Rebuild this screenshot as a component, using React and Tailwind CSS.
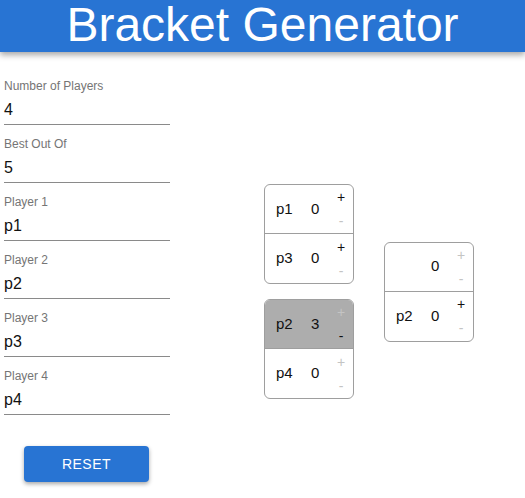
import React from "react";

function Field({ label, value }) {
  return (
    <div className="pt-[11px]">
      <div className="h-[14px] pt-[1px] text-[12px] leading-[14px] text-[#757575]">{label}</div>
      <div className="mt-[4px] h-[24px] pt-[2px] text-[16px] leading-[24px] text-[#111]">{value}</div>
      <div className="mt-[4px] h-px bg-[#8a8a8a]" />
    </div>
  );
}

function Row({ name, score, plus, minus, bg, border }) {
  return (
    <div className={`flex h-[49px] items-center pl-[11px] ${bg || ""} ${border ? "border-b border-[#9e9e9e]" : ""}`}>
      <div className="w-[35px] text-[15px] text-[#111]">{name}</div>
      <div className="text-[15px] text-[#111]">{score}</div>
      <div className="ml-auto mr-[4px] flex w-[16px] flex-col text-center text-[14px]">
        <span className={`leading-[24px] ${plus ? "text-[#111]" : "text-[#c4c4c4]"}`}>+</span>
        <span className={`leading-[24px] ${minus ? "text-[#111]" : "text-[#c4c4c4]"}`}>-</span>
      </div>
    </div>
  );
}

function Match({ top, bottom }) {
  return (
    <div className="w-[90px] overflow-hidden rounded-[6px] border border-[#9e9e9e] bg-white">
      <Row {...top} border />
      <Row {...bottom} />
    </div>
  );
}

export default function App() {
  return (
    <div className="min-h-[498px] bg-white font-['Liberation_Sans',Arial,sans-serif]">
      <div className="relative z-10 h-[52px] bg-[#2874d3] pt-[1px] text-center shadow-[0_3px_6px_rgba(0,0,0,0.35)]">
        <h1 className="text-[48px] leading-[48px] text-white">Bracket Generator</h1>
      </div>
      <div className="flex">
        <div className="w-[170px] pl-[4px] pt-[15px]">
          <Field label="Number of Players" value="4" />
          <Field label="Best Out Of" value="5" />
          <Field label="Player 1" value="p1" />
          <Field label="Player 2" value="p2" />
          <Field label="Player 3" value="p3" />
          <Field label="Player 4" value="p4" />
          <button className="ml-[20px] mt-[31px] h-[36px] w-[125px] rounded-[4px] bg-[#2874d3] text-[14px] tracking-[0.5px] text-white shadow-[0_2px_4px_rgba(0,0,0,0.35)]">
            RESET
          </button>
        </div>
        <div className="ml-[94px] mt-[132px] flex items-center gap-[30px] self-start">
          <div className="flex flex-col gap-[15px]">
            <Match
              top={{ name: "p1", score: "0", plus: true, minus: false }}
              bottom={{ name: "p3", score: "0", plus: true, minus: false }}
            />
            <Match
              top={{ name: "p2", score: "3", plus: false, minus: true, bg: "bg-[#adadad]" }}
              bottom={{ name: "p4", score: "0", plus: false, minus: false }}
            />
          </div>
          <Match
            top={{ name: "", score: "0", plus: false, minus: false }}
            bottom={{ name: "p2", score: "0", plus: true, minus: false }}
          />
        </div>
      </div>
    </div>
  );
}
